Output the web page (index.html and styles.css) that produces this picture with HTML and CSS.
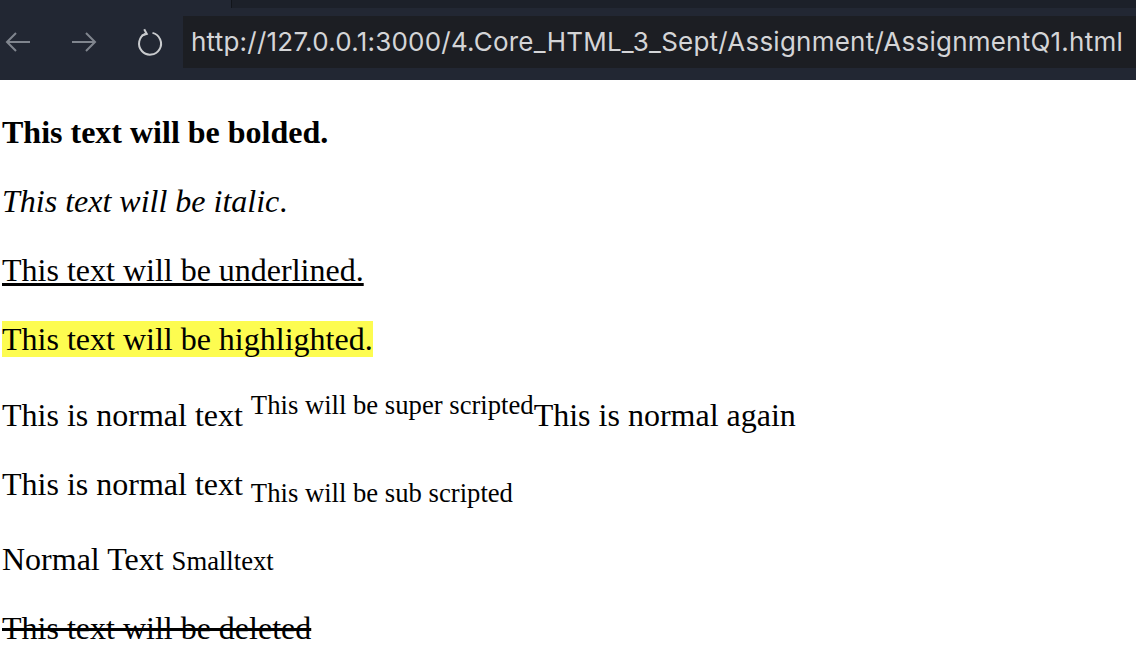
FILE: index.html
```html
<!DOCTYPE html>
<html>
<head>
<meta charset="utf-8">
<link rel="stylesheet" href="styles.css">
</head>
<body>
<header class="toolbar">
  <div class="tabstrip"><div class="tab-gap"></div><div class="tab-dark"></div></div>
  <div class="navrow">
    <div class="navbtns">
      <svg class="ico back" width="28" height="24" viewBox="0 0 28 24"><path d="M26 12H3M12 3L3 12l9 9" fill="none" stroke="#80858e" stroke-width="2"/></svg>
      <svg class="ico fwd" width="28" height="24" viewBox="0 0 28 24"><path d="M2 12h23M16 3l9 9-9 9" fill="none" stroke="#80858e" stroke-width="2"/></svg>
      <svg class="ico reload" width="28" height="30" viewBox="0 0 28 30"><path d="M9.5 5.6A11 11 0 1 0 16.5 4.9" fill="none" stroke="#c9cbce" stroke-width="2"/><path d="M8.2 1.2l2.6 4.8-5.2 1.6" fill="none" stroke="#c9cbce" stroke-width="2"/></svg>
    </div>
    <div class="address">http://127.0.0.1:3000/4.Core_HTML_3_Sept/Assignment/AssignmentQ1.html</div>
  </div>
</header>
<main class="content">
  <p><b>This text will be bolded.</b></p>
  <p><i>This text will be italic</i>.</p>
  <p><u>This text will be underlined.</u></p>
  <p><mark>This text will be highlighted.</mark></p>
  <p>This is normal text <sup>This will be super scripted</sup>This is normal again</p>
  <p>This is normal text <sub>This will be sub scripted</sub></p>
  <p>Normal Text <small>Smalltext</small></p>
  <p><del>This text will be deleted</del></p>
</main>
</body>
</html>
```
FILE: styles.css
```css
html, body {
  margin: 0;
  padding: 0;
  background: #ffffff;
}
body {
  font-family: "Liberation Serif", "Times New Roman", serif;
  font-size: 32px;
  color: #000;
  overflow: hidden;
}
.toolbar {
  height: 80px;
  background: #222733;
  display: flex;
  flex-direction: column;
}
.tabstrip {
  height: 8px;
  display: flex;
}
.tab-gap {
  width: 231px;
}
.tab-dark {
  flex: 1;
  background: #1c2029;
  border-left: 1px solid #12151b;
}
.navrow {
  display: flex;
  align-items: flex-start;
  margin-top: 8px;
}
.navbtns {
  width: 183px;
  height: 52px;
  display: flex;
  align-items: center;
}
.ico { display: block; flex: none; }
.back { margin-left: 4px; }
.fwd { margin-left: 38px; }
.reload { margin-left: 38px; margin-top: 2px; }
.address {
  flex: 1;
  height: 52px;
  background: #1c1e23;
  color: #d4d5d7;
  font-family: "Inter", "Open Sans", sans-serif;
  font-size: 26px;
  letter-spacing: 0.23px;
  line-height: 52px;
  padding-left: 8px;
  white-space: nowrap;
  overflow: hidden;
}
.content {
  padding-left: 2px;
  padding-top: 2px;
}
.content p {
  margin: 32px 0;
}
mark {
  background: #fdfc50;
  color: #000;
}
```
